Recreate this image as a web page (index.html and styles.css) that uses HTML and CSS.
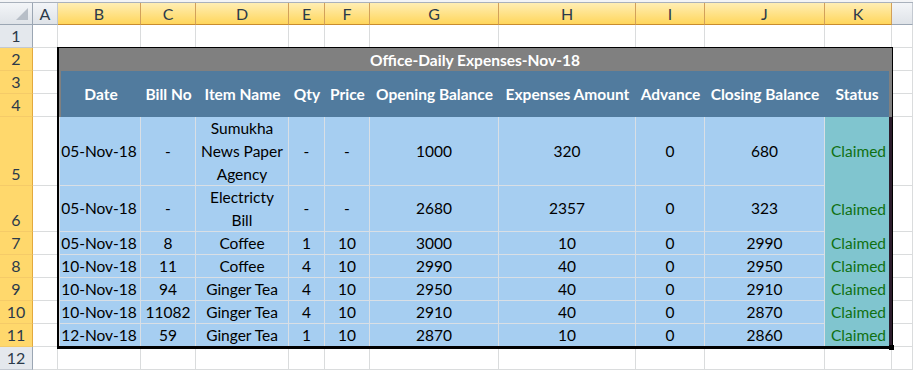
FILE: index.html
```html
<!DOCTYPE html>
<html lang="en">
<head>
  <meta charset="utf-8">
  <title>Office-Daily Expenses-Nov-18</title>
  <link rel="stylesheet" href="styles.css">
</head>
<body>
  <div class="topbar"></div>

  <div class="sheet">
    <!-- заголовки столбцов -->
    <div class="corner"></div>
    <div class="col-head">A</div>
    <div class="col-head is-selected">B</div>
    <div class="col-head is-selected">C</div>
    <div class="col-head is-selected">D</div>
    <div class="col-head is-selected">E</div>
    <div class="col-head is-selected">F</div>
    <div class="col-head is-selected">G</div>
    <div class="col-head is-selected">H</div>
    <div class="col-head is-selected">I</div>
    <div class="col-head is-selected">J</div>
    <div class="col-head is-selected">K</div>
    <div class="col-head"></div>

    <!-- строка 1 -->
    <div class="row-head">1</div>
    <div class="cell"></div><div class="cell"></div><div class="cell"></div><div class="cell"></div>
    <div class="cell"></div><div class="cell"></div><div class="cell"></div><div class="cell"></div>
    <div class="cell"></div><div class="cell"></div><div class="cell"></div><div class="cell"></div>

    <!-- строки 2-11: таблица стоит отдельно -->
    <div class="row-head is-selected">2</div><div class="cell"></div><div class="cell"></div>
    <div class="row-head is-selected">3</div><div class="cell"></div><div class="cell"></div>
    <div class="row-head is-selected">4</div><div class="cell"></div><div class="cell"></div>
    <div class="row-head is-selected">5</div><div class="cell"></div><div class="cell"></div>
    <div class="row-head is-selected">6</div><div class="cell"></div><div class="cell"></div>
    <div class="row-head is-selected">7</div><div class="cell"></div><div class="cell"></div>
    <div class="row-head is-selected">8</div><div class="cell"></div><div class="cell"></div>
    <div class="row-head is-selected">9</div><div class="cell"></div><div class="cell"></div>
    <div class="row-head is-selected">10</div><div class="cell"></div><div class="cell"></div>
    <div class="row-head is-selected">11</div><div class="cell"></div><div class="cell"></div>

    <!-- строка 12 -->
    <div class="row-head">12</div>
    <div class="cell"></div><div class="cell"></div><div class="cell"></div><div class="cell"></div>
    <div class="cell"></div><div class="cell"></div><div class="cell"></div><div class="cell"></div>
    <div class="cell"></div><div class="cell"></div><div class="cell"></div><div class="cell"></div>

    <div class="expenses">
      <div class="expenses__title">Office-Daily Expenses-Nov-18</div>

      <div class="expenses__th expenses__th--first">Date</div>
      <div class="expenses__th">Bill No</div>
      <div class="expenses__th">Item Name</div>
      <div class="expenses__th">Qty</div>
      <div class="expenses__th">Price</div>
      <div class="expenses__th">Opening Balance</div>
      <div class="expenses__th">Expenses Amount</div>
      <div class="expenses__th">Advance</div>
      <div class="expenses__th">Closing Balance</div>
      <div class="expenses__th expenses__th--last">Status</div>

      <div class="expenses__td expenses__td--first">05-Nov-18</div>
      <div class="expenses__td">-</div>
      <div class="expenses__td">Sumukha<br>News Paper<br>Agency</div>
      <div class="expenses__td">-</div>
      <div class="expenses__td">-</div>
      <div class="expenses__td">1000</div>
      <div class="expenses__td">320</div>
      <div class="expenses__td">0</div>
      <div class="expenses__td">680</div>
      <div class="expenses__td expenses__td--status">Claimed</div>

      <div class="expenses__td expenses__td--first">05-Nov-18</div>
      <div class="expenses__td">-</div>
      <div class="expenses__td">Electricty<br>Bill</div>
      <div class="expenses__td">-</div>
      <div class="expenses__td">-</div>
      <div class="expenses__td">2680</div>
      <div class="expenses__td">2357</div>
      <div class="expenses__td">0</div>
      <div class="expenses__td">323</div>
      <div class="expenses__td expenses__td--status">Claimed</div>

      <div class="expenses__td expenses__td--first">05-Nov-18</div>
      <div class="expenses__td">8</div>
      <div class="expenses__td">Coffee</div>
      <div class="expenses__td">1</div>
      <div class="expenses__td">10</div>
      <div class="expenses__td">3000</div>
      <div class="expenses__td">10</div>
      <div class="expenses__td">0</div>
      <div class="expenses__td">2990</div>
      <div class="expenses__td expenses__td--status">Claimed</div>

      <div class="expenses__td expenses__td--first">10-Nov-18</div>
      <div class="expenses__td">11</div>
      <div class="expenses__td">Coffee</div>
      <div class="expenses__td">4</div>
      <div class="expenses__td">10</div>
      <div class="expenses__td">2990</div>
      <div class="expenses__td">40</div>
      <div class="expenses__td">0</div>
      <div class="expenses__td">2950</div>
      <div class="expenses__td expenses__td--status">Claimed</div>

      <div class="expenses__td expenses__td--first">10-Nov-18</div>
      <div class="expenses__td">94</div>
      <div class="expenses__td">Ginger Tea</div>
      <div class="expenses__td">4</div>
      <div class="expenses__td">10</div>
      <div class="expenses__td">2950</div>
      <div class="expenses__td">40</div>
      <div class="expenses__td">0</div>
      <div class="expenses__td">2910</div>
      <div class="expenses__td expenses__td--status">Claimed</div>

      <div class="expenses__td expenses__td--first">10-Nov-18</div>
      <div class="expenses__td">11082</div>
      <div class="expenses__td">Ginger Tea</div>
      <div class="expenses__td">4</div>
      <div class="expenses__td">10</div>
      <div class="expenses__td">2910</div>
      <div class="expenses__td">40</div>
      <div class="expenses__td">0</div>
      <div class="expenses__td">2870</div>
      <div class="expenses__td expenses__td--status">Claimed</div>

      <div class="expenses__td expenses__td--first">12-Nov-18</div>
      <div class="expenses__td">59</div>
      <div class="expenses__td">Ginger Tea</div>
      <div class="expenses__td">1</div>
      <div class="expenses__td">10</div>
      <div class="expenses__td">2870</div>
      <div class="expenses__td">10</div>
      <div class="expenses__td">0</div>
      <div class="expenses__td">2860</div>
      <div class="expenses__td expenses__td--status">Claimed</div>

      <span class="fill-handle"></span>
    </div>
  </div>
</body>
</html>
```

FILE: styles.css
```css
*, *::before, *::after {
  box-sizing: border-box;
}

body {
  margin: 0;
  background: #ffffff;
  font-family: "Lato", "Open Sans", sans-serif;
  font-size: 15.5px;
  color: #000000;
}

.topbar {
  height: 3px;
  background: #f3f4f6;
  border-bottom: 1px solid #a9b1bc;
}

/* Сетка листа: заголовок строк, A..K и хвост справа */
.sheet {
  display: grid;
  grid-template-columns: 33px 25px 83px 55px 93px 36px 45px 129px 137px 69px 120px 67px 21px;
  grid-template-rows: 22px repeat(4, 23px) 69px 46px repeat(6, 23px);
}

.cell {
  border-right: 1px solid #dadcdd;
  border-bottom: 1px solid #dadcdd;
}

.corner {
  display: flex;
  align-items: flex-end;
  justify-content: flex-end;
  padding: 0 4px 4px 0;
  background: linear-gradient(#f3f5f8, #dfe3e8);
  border-right: 1px solid #9ba6b3;
  border-bottom: 1px solid #9ba6b3;
}

.corner::after {
  content: "";
  width: 12px;
  height: 12px;
  background: #b7bec7;
  clip-path: polygon(100% 0, 100% 100%, 0 100%);
}

.col-head {
  display: flex;
  align-items: center;
  justify-content: center;
  background: linear-gradient(#f3f5f8, #dfe3e8);
  border-right: 1px solid #c3c9d1;
  border-bottom: 1px solid #9ba6b3;
  color: #2b3a4a;
  font-size: 16px;
}

.col-head.is-selected {
  background: linear-gradient(#ffeeb4, #ffd65c);
  border-right-color: #d2a05a;
  border-bottom-color: #c98c2e;
}

.row-head {
  display: flex;
  align-items: flex-end;
  justify-content: center;
  padding-bottom: 2px;
  background: #e4e8ed;
  border-right: 1px solid #9ba6b3;
  border-bottom: 1px solid #c3c9d1;
  color: #2b3a4a;
  font-size: 16px;
}

.row-head.is-selected {
  background: #ffd86c;
  border-right-color: #e2a93e;
  border-bottom-color: #f5cb68;
}

/* Таблица расходов, выделенный диапазон B2:K11 */
.expenses {
  grid-column: 3 / 13;
  grid-row: 3 / 13;
  position: relative;
  display: grid;
  grid-template-columns: 83px 55px 93px 36px 45px 129px 137px 69px 120px 67px;
  grid-template-rows: 23px 46px 69px 46px repeat(5, 23px);
}

.expenses::after {
  content: "";
  position: absolute;
  top: -1px;
  left: -1px;
  right: -1px;
  bottom: -2px;
  border-style: solid;
  border-color: #000000;
  border-width: 1px 1px 3px 2px;
  pointer-events: none;
}

.fill-handle {
  position: absolute;
  right: -2px;
  bottom: -3px;
  width: 5px;
  height: 5px;
  background: #000000;
  z-index: 1;
}

.expenses__title {
  grid-column: 1 / -1;
  display: flex;
  align-items: center;
  justify-content: center;
  background: #808080;
  color: #ffffff;
  font-weight: 700;
}

.expenses__th {
  display: flex;
  align-items: center;
  justify-content: center;
  background: #517b9e;
  color: #ffffff;
  font-weight: 700;
  white-space: nowrap;
}

.expenses__th--first {
  border-left: 3px solid #808080;
}

.expenses__th--last {
  border-right: 3px solid #808080;
}

.expenses__td {
  display: flex;
  align-items: center;
  justify-content: center;
  text-align: center;
  line-height: 23px;
  white-space: nowrap;
  background: #a6cef1;
  border-right: 1px solid #d9dfe5;
  border-bottom: 1px solid #d9dfe5;
}

.expenses__td--first {
  box-shadow: inset 2px 0 #d9dfe5;
}

.expenses__td--status {
  background: #80c5cf;
  color: #107012;
  border: 0;
  box-shadow: inset -3px 0 #2c1c2c;
}
```
